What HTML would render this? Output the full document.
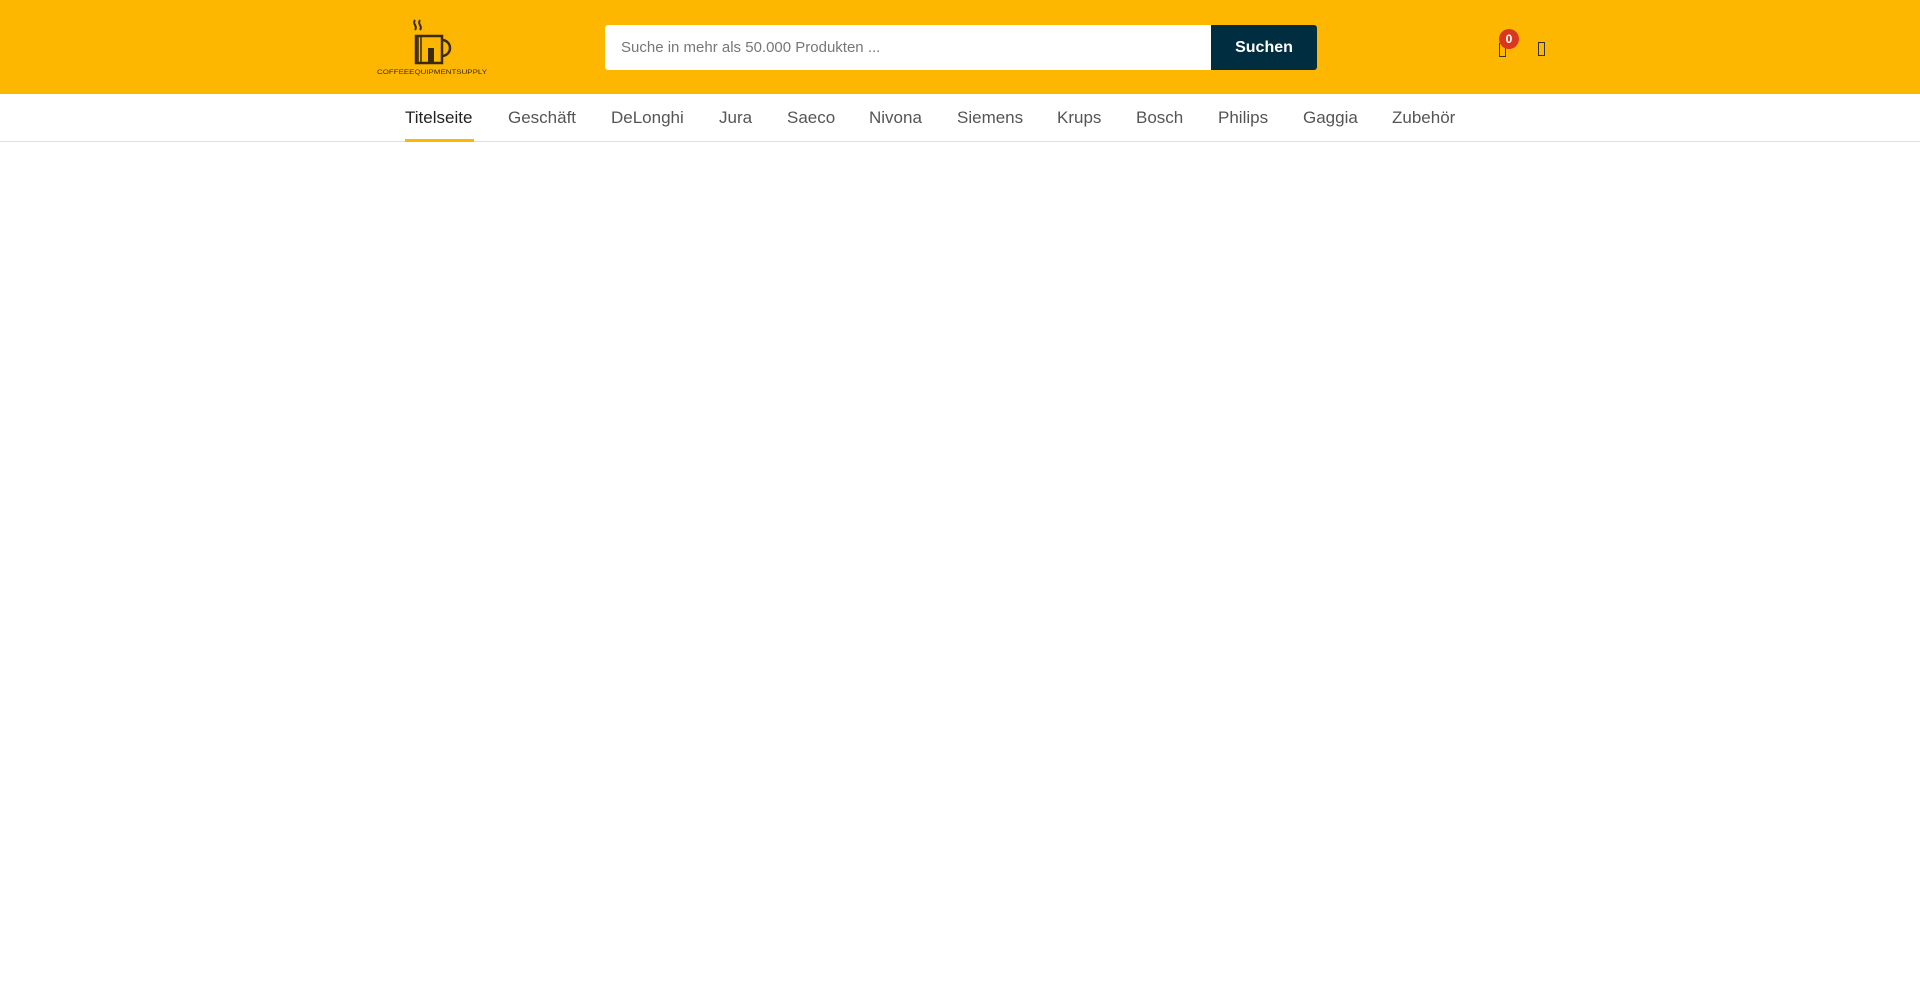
<!DOCTYPE html>
<html><head><meta charset="utf-8"><style>
*{margin:0;padding:0;box-sizing:border-box}
body{width:1920px;height:993px;background:#fff;font-family:"Liberation Sans",sans-serif;position:relative;overflow:hidden}
.top{position:absolute;left:0;top:0;width:1920px;height:94px;background:#fdb700}
.search{position:absolute;left:605px;top:25px;width:606px;height:45px;background:#fff;border-radius:3px 0 0 3px;font-size:15px;color:#777;padding:14px 16px}
.btn{position:absolute;left:1211px;top:25px;width:106px;height:45px;background:#002d40;border-radius:0 3px 3px 0;color:#fff;font-weight:bold;font-size:16px;text-align:center;line-height:45px}
.nav{position:absolute;top:94px;left:0;width:1920px;height:48px;border-bottom:1px solid #ddd}
.nav span{position:absolute;top:14px;font-size:17px;color:#555}
.badge{position:absolute;left:1499px;top:29px;width:20px;height:20px;border-radius:50%;background:#d9381e;color:#fff;font-size:12px;font-weight:bold;text-align:center;line-height:20px}
.ic{position:absolute;width:7px;height:14px;border:1.5px solid #333;top:43px}
</style></head><body>
<div class="top">
<svg style="position:absolute;left:375px;top:18px" width="120" height="60" viewBox="0 0 120 60">
<path d="M40 2c-3 4 3 6 0 10M45 2c-3 4 3 6 0 10" stroke="#3a2a10" stroke-width="2" fill="none"/>
<path d="M43 18h-2v27h26V18z" fill="none" stroke="#3a2a10" stroke-width="2.5"/>
<path d="M43 18v27M46 18v27" stroke="#3a2a10" stroke-width="1.5"/>
<rect x="53" y="30" width="6" height="15" fill="#3a2a10"/>
<path d="M67 22a7 7 0 0 1 0 16" stroke="#3a2a10" stroke-width="2.5" fill="none"/>
<text x="2" y="56" font-size="6.5" fill="#3a2a10" font-family="Liberation Sans" textLength="110" lengthAdjust="spacingAndGlyphs">COFFEEEQUIPMENTSUPPLY</text>
</svg>
<div class="search">Suche in mehr als 50.000 Produkten ...</div>
<div class="btn">Suchen</div>
<div class="ic" style="left:1499px"></div>
<div class="badge">0</div>
<div class="ic" style="left:1538px;top:42px"></div>
</div>
<div class="nav">
<span style="left:405px;color:#222">Titelseite</span>
<div style="position:absolute;left:405px;top:45px;width:69px;height:3px;background:#fdb700"></div>
<span style="left:508px">Geschäft</span>
<span style="left:611px">DeLonghi</span>
<span style="left:719px">Jura</span>
<span style="left:787px">Saeco</span>
<span style="left:869px">Nivona</span>
<span style="left:957px">Siemens</span>
<span style="left:1057px">Krups</span>
<span style="left:1136px">Bosch</span>
<span style="left:1218px">Philips</span>
<span style="left:1303px">Gaggia</span>
<span style="left:1392px">Zubehör</span>
</div>
</body></html>
